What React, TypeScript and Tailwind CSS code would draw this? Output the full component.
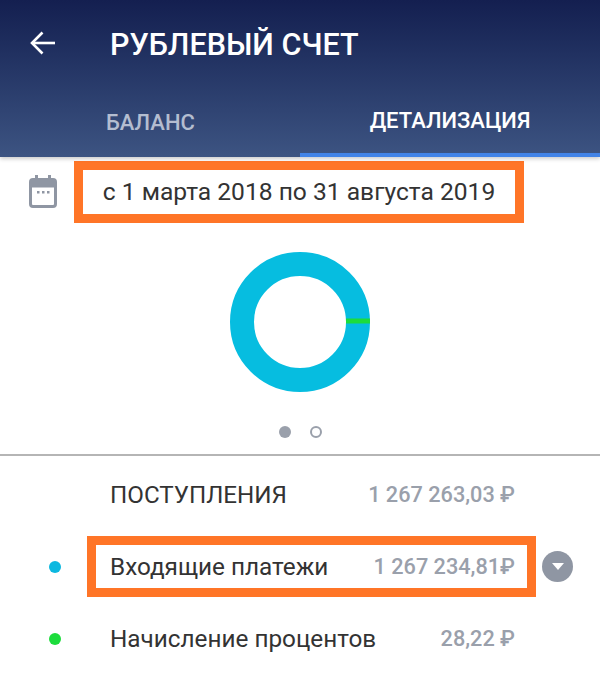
const font = { fontFamily: "Roboto, 'Noto Sans', sans-serif" };

function BackIcon() {
  return (
    <svg width="26" height="26" viewBox="0 0 26 26" fill="none" stroke="white" strokeWidth="2.6">
      <path d="M25 13H2" />
      <path d="M12.5 2.5 2 13l10.5 10.5" />
    </svg>
  );
}

function CalendarIcon() {
  return (
    <svg width="28" height="34" viewBox="0 0 28 34">
      <rect x="6" y="0" width="3" height="6" fill="#8f96a3" />
      <rect x="19" y="0" width="3" height="6" fill="#8f96a3" />
      <rect x="1.5" y="4.5" width="25" height="27" rx="2.5" fill="#fff" stroke="#8f96a3" strokeWidth="3" />
      <rect x="1.5" y="4.5" width="25" height="8" fill="#8f96a3" />
      <rect x="8" y="16" width="2.5" height="2.5" fill="#8f96a3" />
      <rect x="13" y="16" width="2.5" height="2.5" fill="#8f96a3" />
      <rect x="18" y="16" width="2.5" height="2.5" fill="#8f96a3" />
    </svg>
  );
}

function Donut() {
  return (
    <svg width="140" height="140" viewBox="0 0 140 140">
      <circle cx="70" cy="70" r="58" fill="none" stroke="#06bde0" strokeWidth="24" />
      <rect x="116" y="66.5" width="24" height="5" fill="#1cdc3c" />
    </svg>
  );
}

function Rub({ value }: { value: string }) {
  return <span className="text-[21.7px] font-medium text-[#9aa0ab] whitespace-nowrap">{value}</span>;
}

export default function App() {
  return (
    <div className="w-[600px] h-[689px] overflow-hidden bg-white flex flex-col" style={font}>
      <header className="h-[157px] shrink-0 flex flex-col bg-gradient-to-b from-[#141f50] to-[#3d5482] shadow-[0_2px_4px_rgba(0,0,0,0.2)] relative">
        <div className="h-[86px] flex items-center pl-[30px]">
          <BackIcon />
          <h1 className="ml-[54px] pt-[3px] text-[30.5px] font-medium text-white">РУБЛЕВЫЙ СЧЕТ</h1>
        </div>
        <div className="grid grid-cols-2 flex-1">
          <div className="flex items-center pl-[106px] pt-[2px] text-[22px] font-medium text-[#b4bdd0]">БАЛАНС</div>
          <div className="flex items-center justify-center pt-[2px] text-[22px] font-medium text-white border-b-[4px] border-[#4283e6]">ДЕТАЛИЗАЦИЯ</div>
        </div>
      </header>

      <div className="flex items-center pl-[29px] mt-[4px]">
        <CalendarIcon />
        <div className="ml-[17px] w-[450px] h-[62px] border-[9px] border-[#ff7527] flex items-center justify-center text-[24.6px] text-[#333] whitespace-nowrap">
          с 1 марта 2018 по 31 августа 2019
        </div>
      </div>

      <div className="flex justify-center mt-[29px]">
        <Donut />
      </div>

      <div className="flex justify-center items-center gap-[19px] mt-[34px]">
        <span className="w-3 h-3 rounded-full bg-[#9aa0ab]" />
        <span className="w-3 h-3 rounded-full border-2 border-[#9aa0ab]" />
      </div>

      <div className="h-[2px] bg-[#b5b5b5] mt-[16px]" />

      <div className="flex items-center h-[80px] pb-[2px] pl-[110px] pr-[85px] justify-between">
        <span className="text-[24.2px] text-[#333]">ПОСТУПЛЕНИЯ</span>
        <Rub value="1 267 263,03 ₽" />
      </div>

      <div className="flex items-center">
        <span className="ml-[49px] w-3 h-3 rounded-full bg-[#0cb8e0]" />
        <div className="ml-[26px] w-[449px] h-[61px] border-[9px] border-[#ff7527] flex items-center justify-between pt-[1px] pl-[14px] pr-[12px]">
          <span className="text-[24.3px] text-[#333]">Входящие платежи</span>
          <Rub value="1 267 234,81₽" />
        </div>
        <span className="ml-[6px] w-[31px] h-[31px] rounded-full bg-[#8f96a3] flex items-center justify-center">
          <svg width="14" height="9" viewBox="0 0 14 9"><path d="M1 1h12L7 8z" fill="white" /></svg>
        </span>
      </div>

      <div className="flex items-center h-[84px]">
        <span className="ml-[49px] w-3 h-3 rounded-full bg-[#1cdc3c]" />
        <span className="ml-[49px] text-[24.3px] text-[#333]">Начисление процентов</span>
        <span className="ml-auto mr-[85px]"><Rub value="28,22 ₽" /></span>
      </div>
    </div>
  );
}
